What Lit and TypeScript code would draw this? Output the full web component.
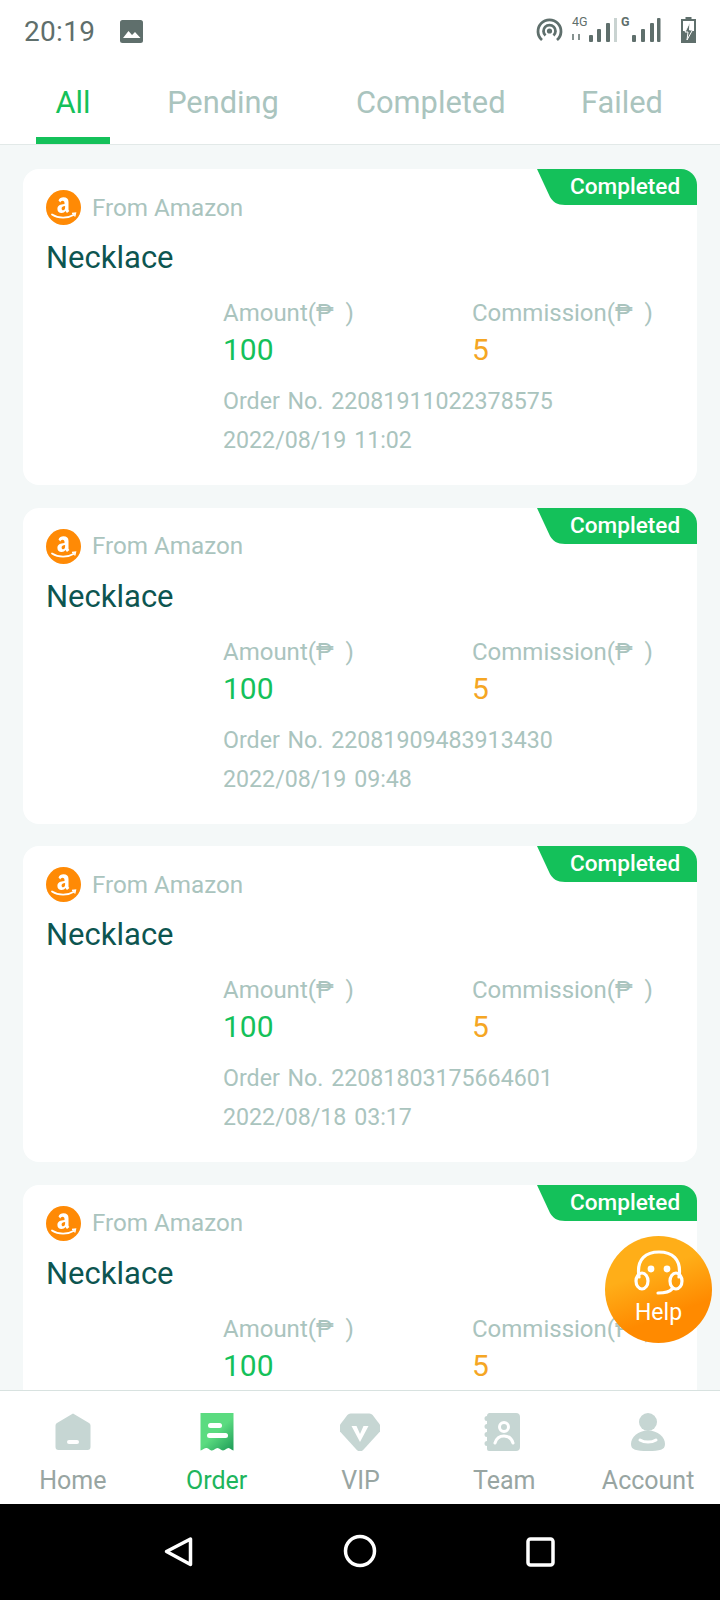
import { LitElement, html, css, svg } from "lit";
import { customElement } from "lit/decorators.js";

const orders = [
  ["22081911022378575", "2022/08/19 11:02"],
  ["22081909483913430", "2022/08/19 09:48"],
  ["22081803175664601", "2022/08/18 03:17"],
  ["22081803175664601", "2022/08/18 03:17"],
];

const amazon = html`<svg class="logo" viewBox="0 0 35 35">
  <circle cx="17.5" cy="17.5" r="17.5" fill="#ff8a05" />
  <path d="M12.5 10.5c.8-2.2 2.8-3.2 5-3.2 3.2 0 5 1.5 5 4.6v7c0 1 .3 1.5.9 2l-2.4 2c-.7-.6-1.1-1.1-1.4-1.8-1 1.3-2.2 2-4 2-2.500 0-4.200-1.500-4.200-4 0-3.400 2.900-4.700 7.100-5v-1c0-1.400-.6-2.300-1.900-2.300-1.200 0-1.900.7-2.200 1.700zm6.600 5.400c-2.200.1-3.500 1-3.500 2.600 0 1.100.6 1.800 1.500 1.800 1.300 0 2-1.300 2-3z" fill="#fff" />
  <path d="M6 24.500c6.500 4.200 15.500 4.200 22 .3" fill="none" stroke="#fff" stroke-width="1.800" stroke-linecap="round" />
  <path d="M26 23.500l3.500-.5-.8 3.500" fill="none" stroke="#fff" stroke-width="1.400" />
</svg>`;

const navIcons = {
  home: svg`<path d="M20 .5 36 10a3 3 0 0 1 1.500 2.500V34a3 3 0 0 1-3 3H5.500a3 3 0 0 1-3-3V12.500A3 3 0 0 1 4 10z" fill="#c6d6d3"/><rect x="14" y="27" width="12" height="4" rx="2" fill="#fff"/>`,
  order: svg`<defs><linearGradient id="og" x1="0.150" y1="0.150" x2="0.850" y2="1"><stop offset=".45" stop-color="#5bdb80"/><stop offset="1" stop-color="#25a35c"/></linearGradient></defs><path d="M3.500 0h33v37.500c-2-.2-3-2-5-2.500-2.500 0-3 2.500-5.500 2.500S23 35 20.500 35s-3 2.500-5.500 2.500S12 35 9 35c-2.300 .5-3.500 2.300-5.500 2.500z" fill="url(#og)"/><rect x="11" y="10" width="14" height="5" rx="2.500" fill="#fff"/><rect x="10" y="20" width="21" height="5" rx="2.500" fill="#fff"/>`,
  vip: svg`<path d="M11 .5h18a4 4 0 0 1 3 1.500l8 11a4 4 0 0 1 0 4.500L23 37a4 4 0 0 1-6 0L0 17.500a4 4 0 0 1 0-4.500l8-11A4 4 0 0 1 11 .5z" fill="#c6d6d3" transform="translate(-1 0) scale(1.050 1)"/><path d="M11.500 13h5l3.500 8 3.500-8h5L20 29z" fill="#fff"/>`,
  team: svg`<path d="M5 0h27a4 4 0 0 1 4 4v30a4 4 0 0 1-4 4H5a2 2 0 0 1-2-2v-3a2 2 0 0 1 0-5v-4a2 2 0 0 1 0-5v-3a2 2 0 0 1 0-5V8a2 2 0 0 1 0-5A3 3 0 0 1 5 0z" fill="#c6d6d3"/><circle cx="20" cy="14" r="4.500" fill="none" stroke="#fff" stroke-width="3"/><path d="M11 30c1.500-5 5-7 9-7s7.500 2 9 7" fill="none" stroke="#fff" stroke-width="3" stroke-linecap="round"/>`,
  account: svg`<circle cx="20" cy="9" r="9" fill="#c6d6d3"/><path d="M20 17.500c-10 0-17 6.500-17 13.500 0 6 5 7 17 7s17-1 17-7c0-7-7-13.500-17-13.500z" fill="#c6d6d3"/><path d="M12 27c4.500 2.800 11.500 2.800 16 0" fill="none" stroke="#fff" stroke-width="3" stroke-linecap="round"/>`,
};

const nav = [
  ["Home", navIcons.home, false],
  ["Order", navIcons.order, true],
  ["VIP", navIcons.vip, false],
  ["Team", navIcons.team, false],
  ["Account", navIcons.account, false],
] as const;

@customElement("app-root")
export class AppRoot extends LitElement {
  static styles = css`
    :host {
      display: flex;
      flex-direction: column;
      position: relative;
      width: 720px;
      height: 1600px;
      overflow: hidden;
      background: #f4f8f8;
      font-family: Roboto, "Liberation Sans", sans-serif;
    }
    .status {
      height: 68px;
      flex: none;
      background: #fff;
      display: flex;
      align-items: center;
      padding: 0 20px 6px 24px;
      box-sizing: border-box;
      color: #5f6f6c;
    }
    .time { font-size: 28px; letter-spacing: 0.3px; width: 96px; }
    .pic { width: 23px; height: 23px; }
    .sys { margin-left: auto; width: 164px; height: 30px; overflow: visible; }
    .tabs {
      height: 77px;
      flex: none;
      background: #fff;
      border-bottom: 1px solid #e2e9e8;
      box-sizing: border-box;
      font-size: 30.8px;
      color: #aac4be;
      display: flex;
      padding: 0 36px;
    }
    .tab {
      height: 76px;
      line-height: 70px;
      text-align: center;
      white-space: nowrap;
      box-sizing: border-box;
    }
    .tab.active { color: #14c15a; border-bottom: 7px solid #14c15a; }
    .t1 { width: 74px; }
    .t2 { width: 114px; margin-left: 56px; }
    .t3 { width: 148px; margin-left: 76px; }
    .t4 { width: 84px; margin-left: 76px; }
    .list {
      flex: 1;
      min-height: 0;
      overflow: hidden;
      padding: 24px 23px 0;
      display: flex;
      flex-direction: column;
      gap: 22.5px;
    }
    .card {
      flex: none;
      position: relative;
      background: #fff;
      border-radius: 16px;
      padding: 21px 23px 25px;
      height: 316px;
      box-sizing: border-box;
    }
    .badge {
      position: absolute;
      top: 0;
      right: 0;
      width: 160px;
      height: 36px;
    }
    .badge svg { position: absolute; inset: 0; }
    .badge span {
      position: absolute;
      left: 33px;
      top: 0;
      line-height: 35px;
      color: #fff;
      font-size: 22.6px;
      font-weight: 500;
    }
    .src {
      display: flex;
      align-items: center;
      height: 35px;
      gap: 11px;
      font-size: 24.2px;
      color: #aac4be;
    }
    .logo { width: 35px; height: 35px; }
    .name {
      margin-top: 13px;
      font-size: 31px;
      line-height: 40px;
      color: #0d5550;
    }
    .info { margin: 17px 0 0 177px; color: #aac4be; font-size: 24px; }
    .cols { display: flex; }
    .col { flex: none; width: 249px; }
    .lbl { line-height: 36px; white-space: nowrap; }
    .val { font-size: 30px; line-height: 38px; }
    .green { color: #14c15a; }
    .orange { color: #f5a623; }
    .meta {
      line-height: 38px;
      font-size: 23.2px;
      word-spacing: 2px;
      margin-top: 1px;
    }
    .meta.first { margin-top: 13px; }
    .nav {
      flex: none;
      height: 114px;
      background: #fff;
      border-top: 1px solid #d8e2e0;
      box-sizing: border-box;
      display: flex;
      padding-left: 1px;
    }
    .item {
      flex: 1;
      display: flex;
      flex-direction: column;
      align-items: center;
      padding-top: 22px;
      font-size: 25px;
      color: #98a5a2;
    }
    .item svg { width: 40px; height: 38px; }
    .item span { line-height: 30px; margin-top: 15px; }
    .item.on { color: #20b55c; }
    .soft {
      flex: none;
      height: 96px;
      background: #000;
      display: flex;
      justify-content: center;
    }
    .soft svg { width: 720px; height: 96px; }
    .help {
      position: absolute;
      left: 605px;
      top: 1236px;
      width: 107px;
      height: 107px;
      border-radius: 50%;
      background: linear-gradient(160deg, #ffae18 35%, #ff8a00 70%);
      display: flex;
      flex-direction: column;
      align-items: center;
      color: #fff;
      font-size: 23px;
    }
    .help svg { width: 50px; height: 46px; margin-top: 14px; }
    .help span { line-height: 30px; margin-top: 2px; }
  `;

  render() {
    return html`
      <div class="status">
        <span class="time">20:19</span>
        <svg class="pic" viewBox="0 0 23 23">
          <rect width="23" height="23" rx="2.500" fill="#5f6f6c" />
          <path d="M3 18l5.500-7 3.500 4 3-3 5.500 6z" fill="#fff" />
        </svg>
        <svg class="sys" viewBox="0 0 164 30" fill="#5f6f6c">
          <g fill="none" stroke="#5f6f6c" stroke-width="2.800">
            <path d="M6 24a11.500 11.500 0 1 1 15 0" />
            <path d="M9.500 19.500a6 6 0 1 1 8 0" />
          </g>
          <circle cx="13.500" cy="15" r="2.600" />
          <text x="36" y="9.500" font-size="12.500" font-family="Roboto">4G</text>
          <path d="M37 18v6M43 18v6" stroke="#5f6f6c" stroke-width="1.500" />
          <rect x="53" y="19" width="4" height="7" rx="1" />
          <rect x="61" y="13" width="4" height="13" rx="1" />
          <rect x="70" y="7" width="4" height="19" rx="1" />
          <rect x="78" y="2" width="3" height="24" fill="#c9d3d1" />
          <text x="85" y="9.500" font-size="12.500" font-weight="700" font-family="Roboto">G</text>
          <rect x="96" y="19" width="4" height="7" rx="1" />
          <rect x="105" y="13" width="4" height="13" rx="1" />
          <rect x="114" y="7" width="4" height="19" rx="1" />
          <rect x="121" y="2" width="3.500" height="24" rx="1" />
          <path d="M149.500 1h6v2h4.500v24h-15V3h4.500z" />
          <rect x="147" y="5" width="11" height="20" fill="#fff" />
          <rect x="147" y="15" width="11" height="10" />
          <path d="M154 6l-5 10h3l-1 8 5.500-10h-3z" stroke="#fff" stroke-width="1" />
        </svg>
      </div>
      <div class="tabs">
        <div class="tab t1 active">All</div>
        <div class="tab t2">Pending</div>
        <div class="tab t3">Completed</div>
        <div class="tab t4">Failed</div>
      </div>
      <div class="list">
        ${orders.map(
          ([no, date]) => html`
            <div class="card">
              <div class="badge">
                <svg viewBox="0 0 160 36" width="160" height="36">
                  <path d="M0 0h144a16 16 0 0 1 16 16v20H28c-8 0-12-3-15-8z" fill="#14c15a" />
                </svg>
                <span>Completed</span>
              </div>
              <div class="src">${amazon}<span>From Amazon</span></div>
              <div class="name">Necklace</div>
              <div class="info">
                <div class="cols">
                  <div class="col">
                    <div class="lbl">Amount(₱&nbsp;&nbsp;)</div>
                    <div class="val green">100</div>
                  </div>
                  <div class="col">
                    <div class="lbl">Commission(₱&nbsp;&nbsp;)</div>
                    <div class="val orange">5</div>
                  </div>
                </div>
                <div class="meta first">Order No. ${no}</div>
                <div class="meta">${date}</div>
              </div>
            </div>
          `
        )}
      </div>
      <div class="nav">
        ${nav.map(
          ([label, icon, on]) => html`
            <div class="item ${on ? "on" : ""}">
              <svg viewBox="0 0 40 38">${icon}</svg>
              <span>${label}</span>
            </div>
          `
        )}
      </div>
      <div class="soft">
        <svg viewBox="0 0 720 96" fill="none" stroke="#fff" stroke-width="3.500" stroke-linejoin="round">
          <path d="M190.500 35v25.500L166.500 47.500z" />
          <circle cx="360" cy="47" r="14.500" />
          <rect x="528" y="35" width="25" height="26" rx="2.500" />
        </svg>
      </div>
      <div class="help">
        <svg viewBox="0 0 50 46" fill="none" stroke="#fff" stroke-width="3.200" stroke-linecap="round">
          <path d="M5 27C2 8 13 2 25 2s23 6 20 25" />
          <ellipse cx="8" cy="31" rx="6" ry="8" />
          <ellipse cx="42" cy="31" rx="6" ry="8" />
          <path d="M38 39c-3 4-10 4-14 4" />
          <circle cx="17" cy="19" r="1.800" fill="#fff" />
          <circle cx="33" cy="19" r="1.800" fill="#fff" />
        </svg>
        <span>Help</span>
      </div>
    `;
  }
}
